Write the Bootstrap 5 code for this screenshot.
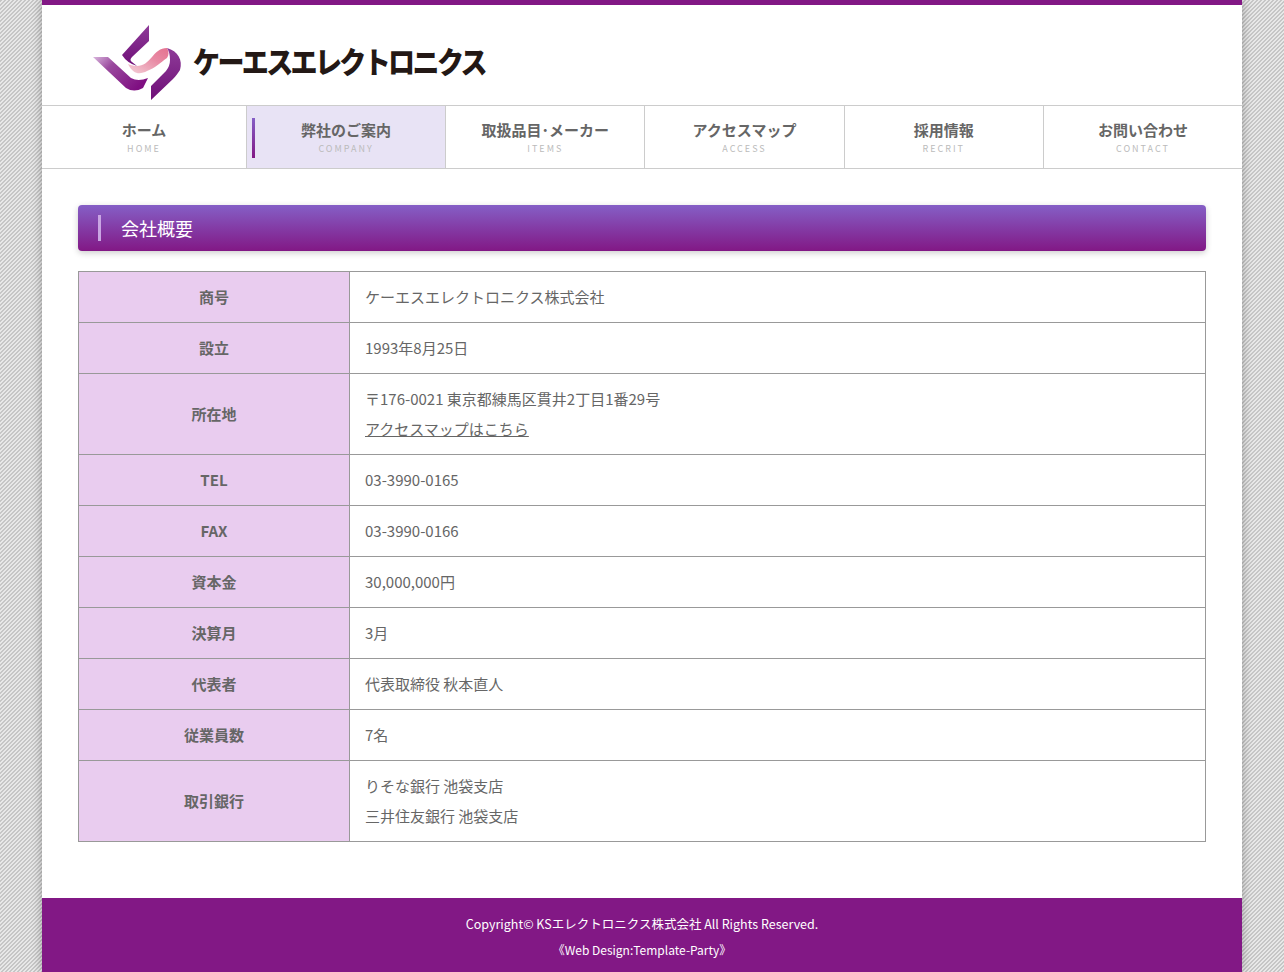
<!DOCTYPE html>
<html lang="ja">
<head>
<meta charset="utf-8">
<title>会社概要</title>
<link href="https://cdn.jsdelivr.net/npm/bootstrap@5.3.0/dist/css/bootstrap.min.css" rel="stylesheet">
<style>
body{font-family:"Noto Sans CJK JP","Noto Sans",sans-serif;font-size:15px;color:#666;line-height:2;
background-color:#ddd;background-image:linear-gradient(135deg,#c6c6c6 25%,#e8e8e8 25%,#e8e8e8 50%,#c6c6c6 50%,#c6c6c6 75%,#e8e8e8 75%);background-size:4px 4px;}
.site-wrap{width:1200px;margin:0 auto;background:#fff;border-top:5px solid #821885;box-shadow:0 0 10px rgba(0,0,0,.3);}
.site-head{height:100px;padding:13px 0 0 48px;}
.logo-word{font-size:30px;font-weight:900;color:#231815;line-height:1;letter-spacing:-2.9px;white-space:nowrap;margin-left:8px;margin-bottom:3px;transform:scaleX(.9);transform-origin:left center;}
.menu-row{border-top:1px solid #ccc;border-bottom:1px solid #ccc;height:64px;}
.menu-cell{display:block;flex:1 1 0;text-align:center;text-decoration:none;color:#666;font-weight:700;border-left:1px solid #ccc;padding-top:9px;height:62px;position:relative;line-height:30px;}
.menu-cell:first-child{border-left:0;flex:0 0 204px;}
.menu-cell span{display:block;font-size:9px;font-weight:400;letter-spacing:2px;color:#bbb;line-height:10px;margin-top:-1px;}
.menu-cell.is-on{background:#e8e3f5;}
.menu-cell.is-on::before{content:"";position:absolute;left:5px;top:12px;width:3px;height:40px;background:linear-gradient(#855fc6,#821885);}
.main-area{padding:36px 36px 56px;}
.sec-title{height:46px;border-radius:4px;background:linear-gradient(#855fc6,#821885);color:#fff;font-size:18px;font-weight:400;line-height:46px;padding-left:43px;margin:0 0 20px;position:relative;box-shadow:0 2px 6px rgba(0,0,0,.2);}
.sec-title::before{content:"";position:absolute;left:20px;top:10px;width:3px;height:26px;background:#c9a5e3;}
.info-table{width:100%;border-collapse:collapse;margin:0;}
.info-table th,.info-table td{border:1px solid #999;padding:10px 15px;line-height:30px;}
.info-table th{width:271px;background:#e9ccef;text-align:center;font-weight:700;color:#666;}
.info-table a{color:#666;}
.site-foot{background:#821885;color:#fff;font-size:12.5px;line-height:26px;text-align:center;padding:13px 0 9px;height:74px;}
.site-foot small{font-size:12px;display:block;}
</style>
</head>
<body>
<div class="site-wrap">
  <header class="site-head d-flex align-items-center">
    <svg width="95" height="80" viewBox="90 22 95 80" class="flex-shrink-0">
      <defs>
        <linearGradient id="g1" x1="0" y1="0" x2="1" y2="0.6"><stop offset="0" stop-color="#d9b6dd"/><stop offset=".35" stop-color="#9a4a9e"/><stop offset="1" stop-color="#7f0f82"/></linearGradient>
        <linearGradient id="g2" x1="0" y1="0" x2="0" y2="1"><stop offset="0" stop-color="#8e3b98"/><stop offset="1" stop-color="#6f0f78"/></linearGradient>
        <linearGradient id="g3" x1="0" y1="1" x2="1" y2="0"><stop offset="0" stop-color="#f3d0d8"/><stop offset=".6" stop-color="#e88aa4"/><stop offset="1" stop-color="#e5728f"/></linearGradient>
      </defs>
      <path fill="url(#g2)" d="M149 25V41L132 57Q129 60 132 62L137 66Q127 63 122 55Z"/>
      <path fill="url(#g3)" d="M128 64C140 69 146 64 152 57C156 52 160 48 167 48C169 52 169 55 167 58C160 63 155 68 147 71C141 74 134 76 128 64Z"/>
      <path fill="url(#g2)" d="M167 48C178 51 183 60 180 70C178 73 176 76 173 79L151 100V86L166 71Q170 66 170 60C170 55 169 51 167 48Z"/>
      <path fill="url(#g1)" d="M93 57H108L131 78Q138 82 148 78L143 88Q134 93 126 88Z"/>
    </svg>
    <div class="logo-word">ケーエスエレクトロニクス</div>
  </header>
  <nav class="menu-row d-flex">
    <a class="menu-cell" href="#">ホーム<span>HOME</span></a>
    <a class="menu-cell is-on" href="#">弊社のご案内<span>COMPANY</span></a>
    <a class="menu-cell" href="#">取扱品目･メーカー<span>ITEMS</span></a>
    <a class="menu-cell" href="#">アクセスマップ<span>ACCESS</span></a>
    <a class="menu-cell" href="#">採用情報<span>RECRIT</span></a>
    <a class="menu-cell" href="#">お問い合わせ<span>CONTACT</span></a>
  </nav>
  <main class="main-area">
    <h2 class="sec-title">会社概要</h2>
    <table class="info-table">
      <tr><th>商号</th><td>ケーエスエレクトロニクス株式会社</td></tr>
      <tr><th>設立</th><td>1993年8月25日</td></tr>
      <tr><th>所在地</th><td>〒176-0021 東京都練馬区貫井2丁目1番29号<br><a href="#">アクセスマップはこちら</a></td></tr>
      <tr><th>TEL</th><td>03-3990-0165</td></tr>
      <tr><th>FAX</th><td>03-3990-0166</td></tr>
      <tr><th>資本金</th><td>30,000,000円</td></tr>
      <tr><th>決算月</th><td>3月</td></tr>
      <tr><th>代表者</th><td>代表取締役 秋本直人</td></tr>
      <tr><th>従業員数</th><td>7名</td></tr>
      <tr><th>取引銀行</th><td>りそな銀行 池袋支店<br>三井住友銀行 池袋支店</td></tr>
    </table>
  </main>
  <footer class="site-foot">Copyright© KSエレクトロニクス株式会社 All Rights Reserved.<small>《Web Design:Template-Party》</small></footer>
</div>
<script src="https://cdn.jsdelivr.net/npm/bootstrap@5.3.0/dist/js/bootstrap.bundle.min.js"></script>
</body>
</html>
